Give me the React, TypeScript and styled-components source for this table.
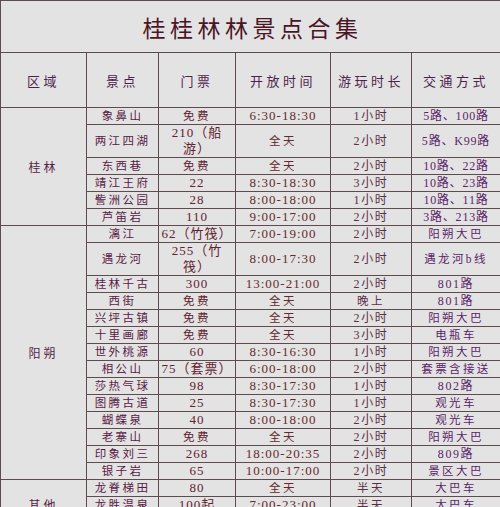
import React from "react";
import styled, { createGlobalStyle } from "styled-components";

const GlobalStyle = createGlobalStyle`
  html, body {
    margin: 0;
    padding: 0;
    background: #e4e3e3;
    overflow: hidden;
  }
  body {
    width: 500px;
    height: 507px;
  }
`;

const SERIF = `"Liberation Serif", "Noto Sans CJK SC", serif`;

const Sheet = styled.table`
  width: 500px;
  table-layout: fixed;
  border-collapse: collapse;
  background: #e4e3e3;
  font-family: ${SERIF};
  border-top: 1px solid #5d4b4d;

  td, th {
    border: 1px solid #5d4b4d;
    padding: 0;
    text-align: center;
    vertical-align: middle;
    overflow: hidden;
    white-space: nowrap;
  }
`;

const TitleCell = styled.th`
  height: 51px;
  font-size: 23px;
  font-weight: 400;
  letter-spacing: 4.5px;
  padding-left: 4px !important;
  color: #4a1626;
`;

const HeadCell = styled.th`
  height: 54px;
  font-size: 13px;
  font-weight: 400;
  letter-spacing: 3.5px;
  color: #4d1f4d;
`;

const Row = styled.tr<{ $double?: boolean }>`
  height: ${p => (p.$double ? "33px" : "16.6px")};
`;

const Region = styled.td`
  font-size: 12px;
  letter-spacing: 3px;
  color: #561d45;
`;

type Kind = "cjk" | "num" | "mix" | "route";

const sizes: Record<Kind, [string, string]> = {
  cjk: ["11.5px", "2.4px"],
  num: ["13px", "1px"],
  mix: ["12px", "1.6px"],
  route: ["12px", "0.8px"],
};

const Cell = styled.td<{ $tone: string; $kind: Kind }>`
  font-size: ${p => sizes[p.$kind][0]};
  letter-spacing: ${p => sizes[p.$kind][1]};
  line-height: 16px;
  color: ${p => p.$tone};
  white-space: ${p => (p.$kind === "route" ? "nowrap" : "normal")} !important;
`;

type Spot = {
  name: string;
  ticket: string;
  open: string;
  stay: string;
  bus: string;
  double?: boolean;
};

const groups: { region: string; spots: Spot[] }[] = [
  {
    region: "桂林",
    spots: [
      { name: "象鼻山", ticket: "免费", open: "6:30-18:30", stay: "1小时", bus: "5路、100路" },
      { name: "两江四湖", ticket: "210（船|游）", open: "全天", stay: "2小时", bus: "5路、K99路", double: true },
      { name: "东西巷", ticket: "免费", open: "全天", stay: "2小时", bus: "10路、22路" },
      { name: "靖江王府", ticket: "22", open: "8:30-18:30", stay: "3小时", bus: "10路、23路" },
      { name: "訾洲公园", ticket: "28", open: "8:00-18:00", stay: "1小时", bus: "10路、11路" },
      { name: "芦笛岩", ticket: "110", open: "9:00-17:00", stay: "2小时", bus: "3路、213路" },
    ],
  },
  {
    region: "阳朔",
    spots: [
      { name: "漓江", ticket: "62（竹筏）", open: "7:00-19:00", stay: "2小时", bus: "阳朔大巴" },
      { name: "遇龙河", ticket: "255（竹|筏）", open: "8:00-17:30", stay: "2小时", bus: "遇龙河b线", double: true },
      { name: "桂林千古", ticket: "300", open: "13:00-21:00", stay: "2小时", bus: "801路" },
      { name: "西街", ticket: "免费", open: "全天", stay: "晚上", bus: "801路" },
      { name: "兴坪古镇", ticket: "免费", open: "全天", stay: "2小时", bus: "阳朔大巴" },
      { name: "十里画廊", ticket: "免费", open: "全天", stay: "3小时", bus: "电瓶车" },
      { name: "世外桃源", ticket: "60", open: "8:30-16:30", stay: "1小时", bus: "阳朔大巴" },
      { name: "相公山", ticket: "75（套票）", open: "6:00-18:00", stay: "2小时", bus: "套票含接送" },
      { name: "莎热气球", ticket: "98", open: "8:30-17:30", stay: "1小时", bus: "802路" },
      { name: "图腾古道", ticket: "25", open: "8:30-17:30", stay: "1小时", bus: "观光车" },
      { name: "蝴蝶泉", ticket: "40", open: "8:00-18:00", stay: "2小时", bus: "观光车" },
      { name: "老寨山", ticket: "免费", open: "全天", stay: "2小时", bus: "阳朔大巴" },
      { name: "印象刘三", ticket: "268", open: "18:00-20:35", stay: "2小时", bus: "809路" },
      { name: "银子岩", ticket: "65", open: "10:00-17:00", stay: "2小时", bus: "景区大巴" },
    ],
  },
  {
    region: "其他",
    spots: [
      { name: "龙脊梯田", ticket: "80", open: "全天", stay: "半天", bus: "大巴车" },
      { name: "龙胜温泉", ticket: "100起", open: "7:00-23:00", stay: "半天", bus: "大巴车" },
      { name: "资江漂流", ticket: "160", open: "8:00-17:00", stay: "半天", bus: "大巴车" },
    ],
  },
];

const kindOf = (s: string, mixed = false): Kind =>
  s.includes("、")
    ? "route"
    : /^[0-9K]/.test(s)
    ? mixed
      ? "mix"
      : "num"
    : /[0-9]/.test(s)
    ? "mix"
    : "cjk";

const lines = (s: string) =>
  s.split("|").map((part, i) => (
    <React.Fragment key={i}>
      {i > 0 && <br />}
      {part}
    </React.Fragment>
  ));

export default function App() {
  return (
    <>
      <GlobalStyle />
      <Sheet>
        <colgroup>
          <col style={{ width: 86 }} />
          <col style={{ width: 72 }} />
          <col style={{ width: 77 }} />
          <col style={{ width: 95 }} />
          <col style={{ width: 81 }} />
          <col style={{ width: 89 }} />
        </colgroup>
        <thead>
          <tr>
            <TitleCell colSpan={6}>桂桂林林景点合集</TitleCell>
          </tr>
          <tr>
            <HeadCell>区域</HeadCell>
            <HeadCell>景点</HeadCell>
            <HeadCell>门票</HeadCell>
            <HeadCell>开放时间</HeadCell>
            <HeadCell>游玩时长</HeadCell>
            <HeadCell>交通方式</HeadCell>
          </tr>
        </thead>
        <tbody>
          {groups.map(g =>
            g.spots.map((s, i) => (
              <Row key={g.region + s.name} $double={s.double}>
                {i === 0 && <Region rowSpan={g.spots.length}>{g.region}</Region>}
                <Cell $tone="#581a45" $kind="cjk">{s.name}</Cell>
                <Cell $tone="#5e2230" $kind={kindOf(s.ticket)}>{lines(s.ticket)}</Cell>
                <Cell $tone="#622a2c" $kind={kindOf(s.open)}>{s.open}</Cell>
                <Cell $tone="#5a2f45" $kind={kindOf(s.stay, true)}>{s.stay}</Cell>
                <Cell $tone="#5a2468" $kind={kindOf(s.bus, true)}>{s.bus}</Cell>
              </Row>
            ))
          )}
        </tbody>
      </Sheet>
    </>
  );
}
